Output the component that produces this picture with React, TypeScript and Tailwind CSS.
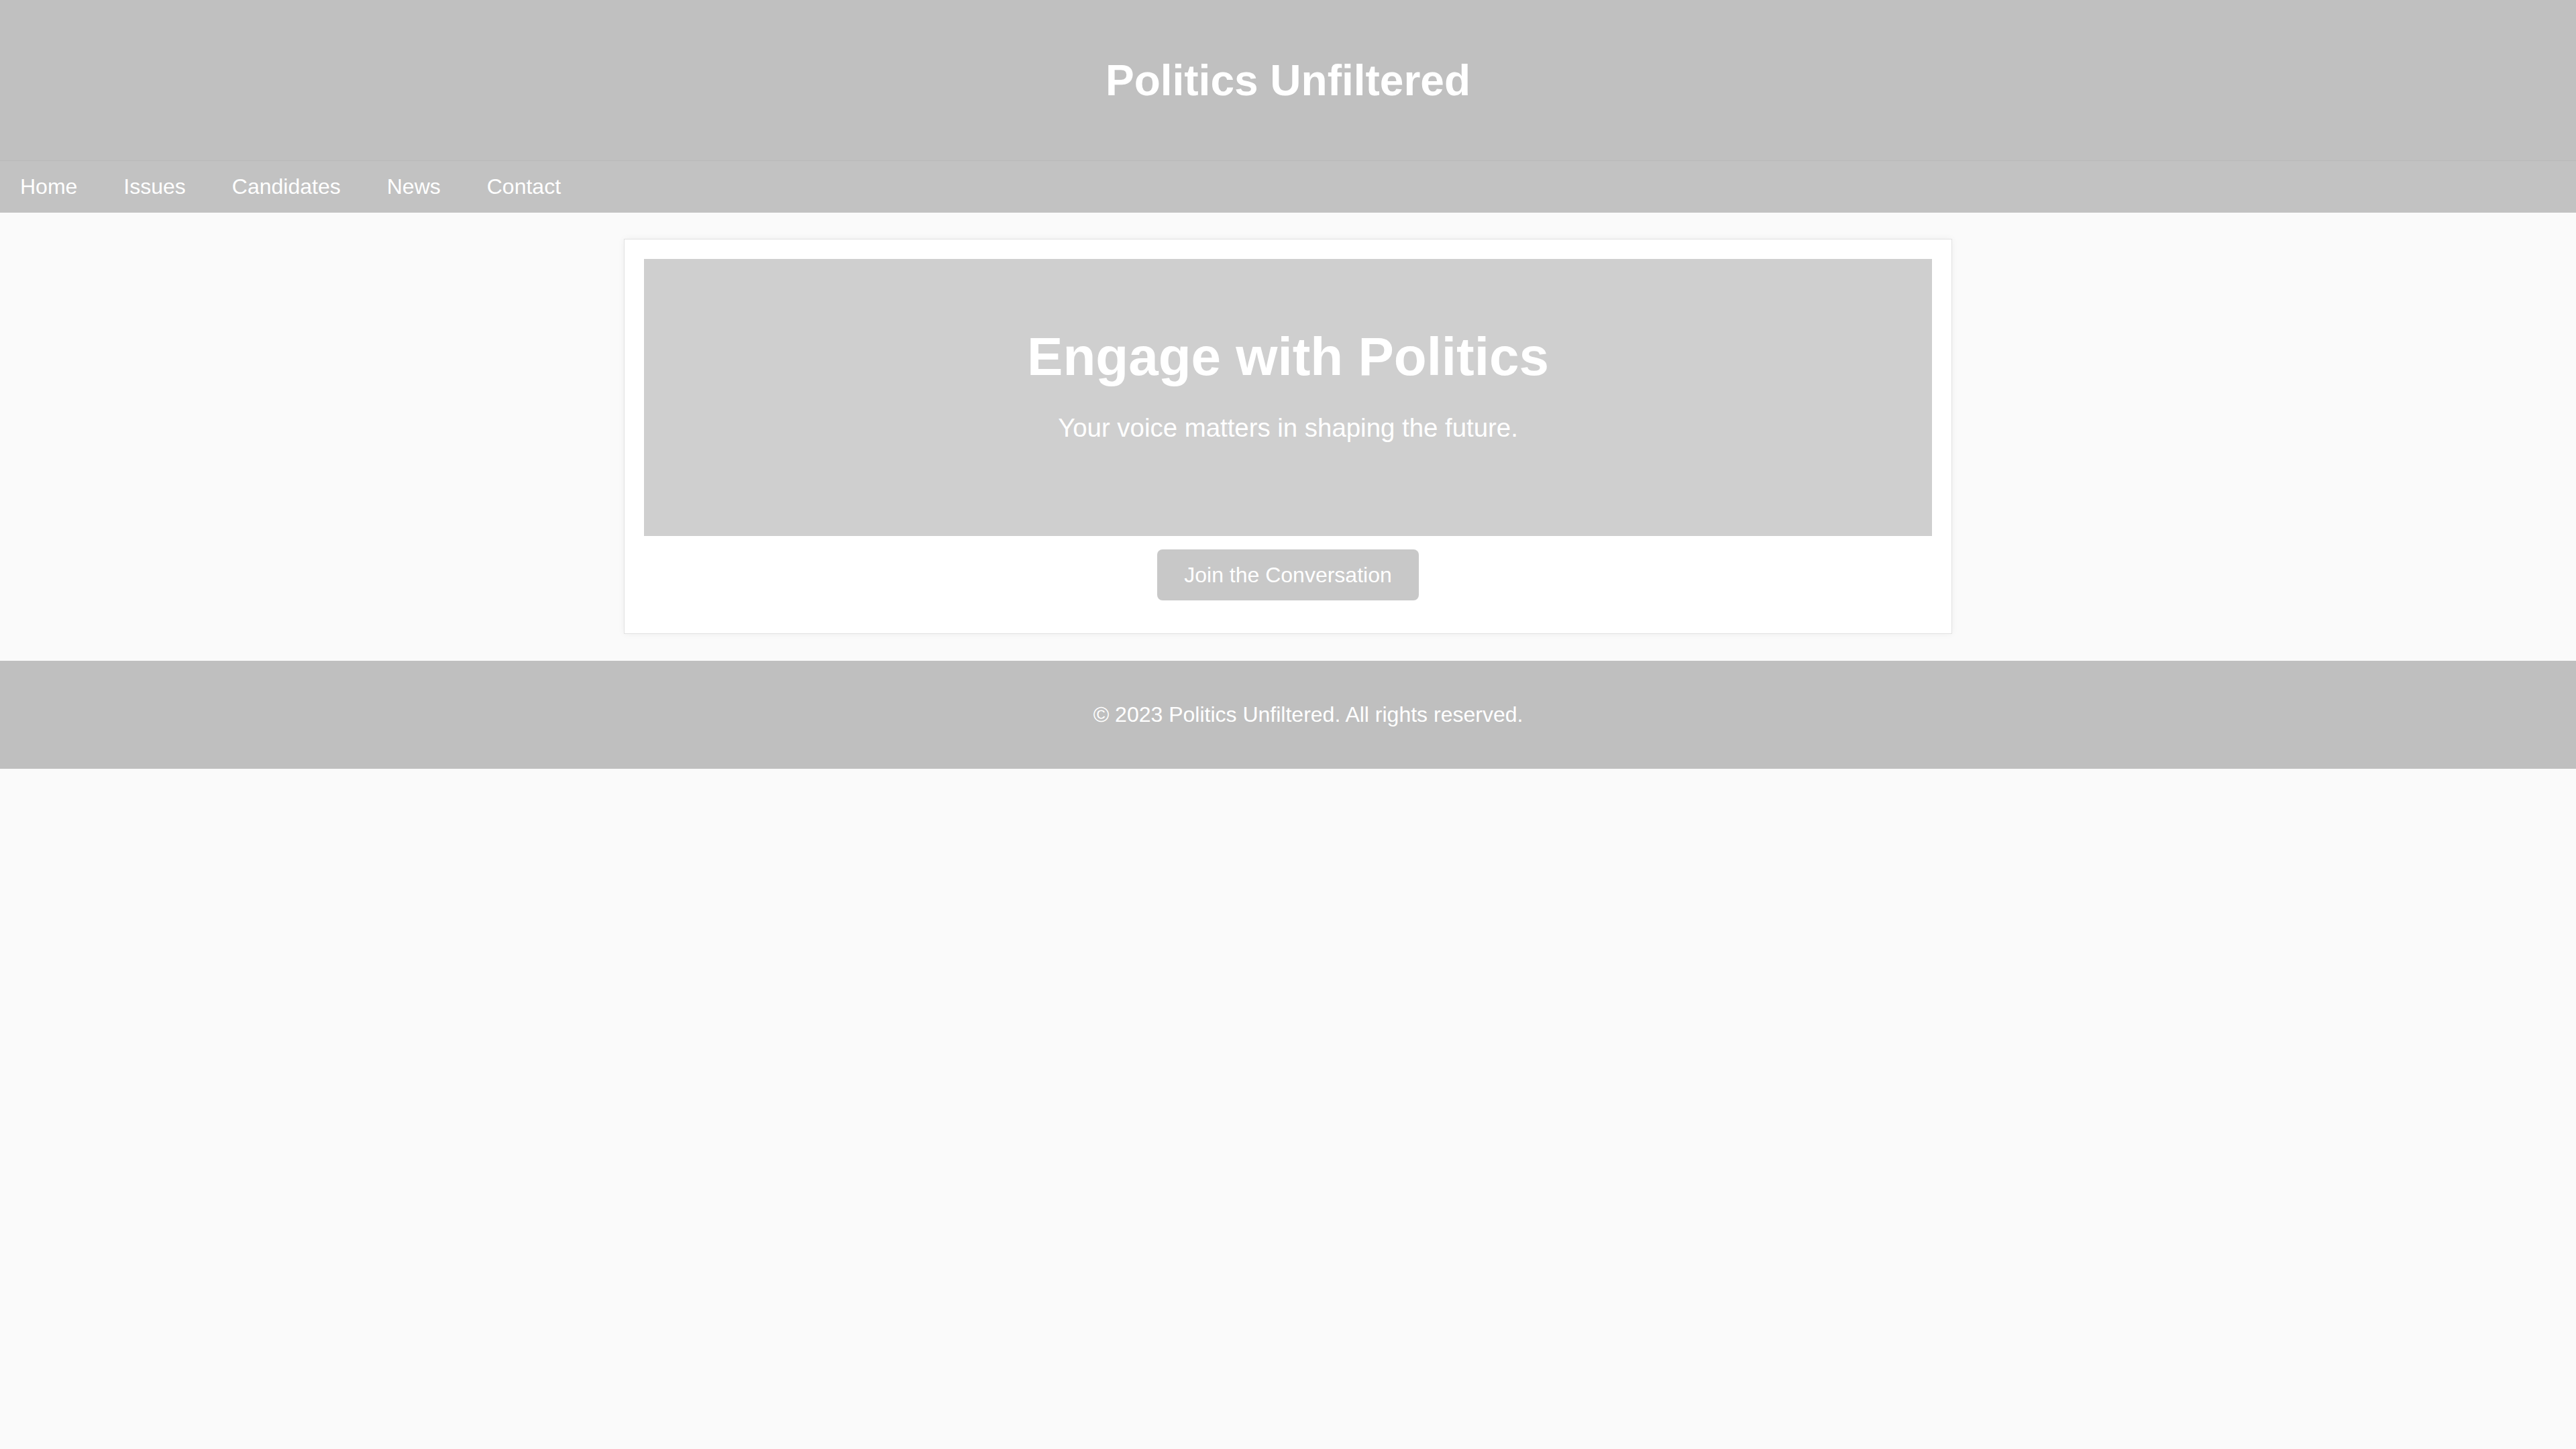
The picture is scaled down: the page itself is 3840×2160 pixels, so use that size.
import React from 'react';

const navLinks = ['Home', 'Issues', 'Candidates', 'News', 'Contact'];

const Header: React.FC = () => (
  <header className="h-[240px] flex items-center justify-center bg-[#c0c0c0] border-b border-[#b9b9b9]">
    <h1 className="text-[64px] leading-[74px] font-bold text-white">Politics Unfiltered</h1>
  </header>
);

const Nav: React.FC = () => (
  <nav className="flex gap-[9px] bg-[#c2c2c2]">
    {navLinks.map((link) => (
      <a key={link} href="#" className="px-[30px] py-[20px] text-[32px] leading-[37px] text-white">
        {link}
      </a>
    ))}
  </nav>
);

const Hero: React.FC = () => (
  <section className="w-[1920px] py-[100px] bg-[#cfcfcf] text-center text-white">
    <h2 className="text-[80px] leading-[92px] font-bold">Engage with Politics</h2>
    <p className="my-[38.4px] text-[38.4px] leading-[44px]">Your voice matters in shaping the future.</p>
  </section>
);

export default function App() {
  return (
    <div className="min-h-screen bg-[#fafafa] font-['Liberation_Sans',Arial,sans-serif]">
      <Header />
      <Nav />
      <main className="pt-[39px] pb-[40px]">
        <div className="w-[1980px] mx-auto p-[29px] bg-white border border-[#e2e2e2] shadow-[0_0_10px_rgba(0,0,0,0.05)] flex flex-col items-center">
          <Hero />
          <button className="my-[20px] px-[40px] py-[20px] rounded-[8px] bg-[#c8c8c8] text-white text-[32px] leading-[36px]">
            Join the Conversation
          </button>
        </div>
      </main>
      <footer className="pl-[60px] py-[62px] bg-[#bfbfbf] text-center text-white text-[32px] leading-[37px]">
        © 2023 Politics Unfiltered. All rights reserved.
      </footer>
    </div>
  );
}
